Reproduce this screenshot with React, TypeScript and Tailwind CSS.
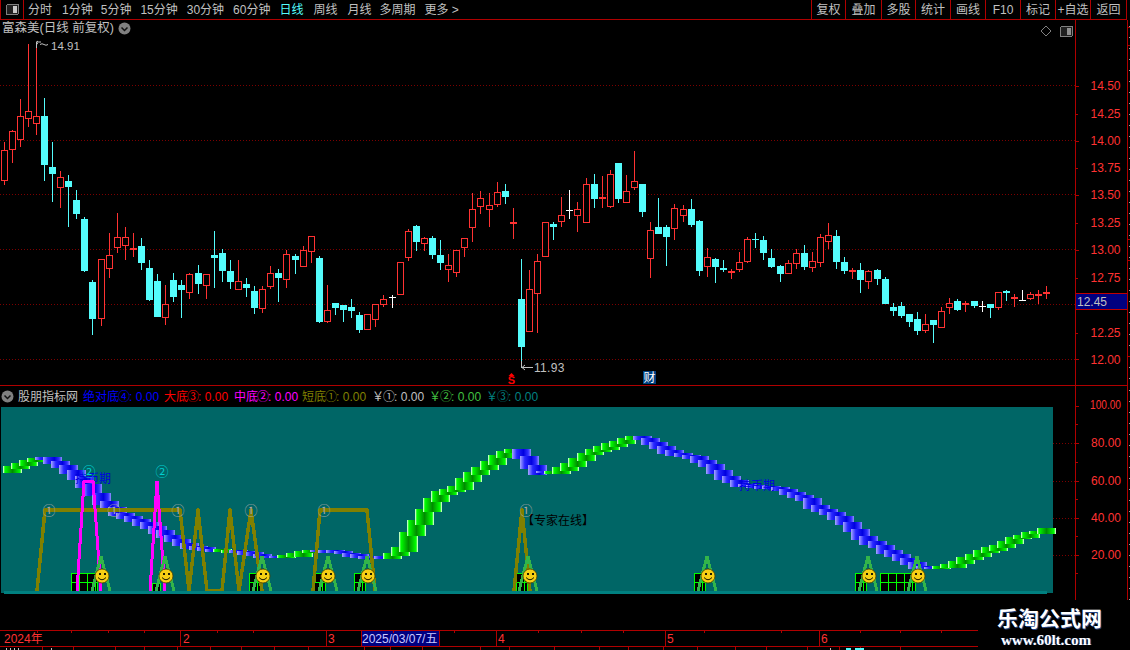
import React from "react";

const RED = "#ff3232";
const CYAN = "#54fcfc";
const LINE = "#b00000";

type C = [string, number, number, number, number];
const g0: C[] = [
  ["r",245,270,360,375],["r",210,213,266,308],["r",117,168,236,260],["r",-48,153,173,200],["r",-54,168,188,224],
  ["c",114,168,315,362],["c",246,321,342,426],["r",333,351,380,444],["c",345,363,381,500],["c",390,420,462,477],
  ["c",471,477,633,636],["c",660,666,777,825],["r",597,597,773,798],["r",519,585,623,654],["r",459,531,560,579],
  ["r",501,531,555,600],["r",519,564,570,591],["c",534,558,609,630],["c",600,624,720,723],["c",642,663,771,771],
  ["r",675,732,771,795],["c",639,660,711,726],["c",660,675,690,774],["r",640,642,696,717],["c",615,639,672,702],
  ["r",642,642,675,717],["c",513,585,594,684],["c",567,579,633,666],["c",600,633,666,687],["r",600,663,687,687],
  ["c",654,672,684,711],["c",678,693,744,762],["r",678,687,744,759],["r",618,639,678,687],["c",627,639,654,726],
];
const g1: C[] = [
  ["r",360,372,447,474],["c",372,378,390,432],["r",348,360,408,408],["r",318,318,363,399],["c",378,384,576,579],
  ["r",465,540,573,579],["c",519,519,534,555],["c",525,525,540,576],["c",507,531,543,564],["c",546,555,600,609],
  ["r",552,552,597,597],["r",522,522,567,591],["r",495,507,522,531],["w",495,501,504,534],["r",396,396,492,492],
  ["r",297,303,381,393],["c",285,288,336,363],["r",321,324,339,363],["c",318,324,375,387],["c",330,375,399,420],
  ["r",372,405,417,456],["r",360,360,426,441],["r",324,324,351,381],["r",189,237,291,336],["r",183,204,228,252],
  ["r",189,225,237,291],["r",156,186,222,231],["c",162,183,201,222],["r",234,276,285,327],["c",387,507,651,714],
  ["r",420,477,603,603],["r",372,393,489,609],["r",276,276,378,378],["c",276,282,291,330],
  ["r",201,255,273,291],["w",180,240,243,267],["r",216,237,255,306],["r",144,162,276,276],["c",132,162,207,234],
  ["r",138,201,210,234],["r",120,132,228,234],["c",99,99,207,219],["r",135,183,216,219],["r",63,153,171,180],
  ["c",162,162,246,261],["r",276,300,384,444],["c",204,291,312,312],["c",285,291,321,408],["r",222,234,294,330],
  ["r",225,237,255,276],["c",207,237,285,291],["c",270,273,423,438],["r",354,381,408,441],["c",384,387,411,459],
  ["c",390,414,420,426],["r",417,423,429,447],["r",366,396,417,426],["r",321,327,393,399],["c",309,327,330,354],
  ["c",318,330,369,390],["c",357,384,411,414],["c",405,408,432,456],["r",390,399,429,432],["r",357,369,399,417],
  ["c",345,369,411,420],["r",366,393,411,426],["r",312,321,396,411],["r",279,315,333,357],["c",300,318,396,417],
];
const g2: C[] = [
  ["c",171,186,213,222],["r",204,210,219,237],["c",189,210,240,279],["r",210,213,243,267],["c",207,210,237,255],
  ["c",231,237,312,312],["c",309,321,333,348],["c",306,318,348,354],["c",342,342,366,381],["c",336,357,393,405],
  ["r",342,372,390,399],["c",360,360,375,429],["r",321,333,381,381],["r",294,309,321,342],["c",297,303,330,333],
  ["r",303,309,318,336],["c",303,303,318,324],["w",303,318,321,336],["c",312,312,324,354],["r",276,276,321,330],
  ["c",270,273,279,303],["r",282,291,300,321],["w",270,300,303,303],["r",276,282,294,300],["r",270,282,288,312],
  ["r",258,276,285,297],
];

const candles = [
  ...g0.map((c) => ({ c, y0: 60 })),
  ...g1.map((c) => ({ c, y0: 130 })),
  ...g2.map((c) => ({ c, y0: 200 })),
];
const cx = (i: number) => 4 + 8 * i + Math.floor(i / 12);

function Candles() {
  return (
    <g shapeRendering="crispEdges">
      {candles.map(({ c, y0 }, i) => {
        const x = cx(i);
        const col = c[0] === "r" ? RED : c[0] === "c" ? CYAN : "#ffffff";
        const Y = (v: number) => Math.round(y0 + v / 3);
        const hi = Y(c[1]), top = Y(c[2]), bot = Y(c[3]), lo = Y(c[4]);
        const thin = bot - top <= 3;
        const outline = c[0] === "r" && !thin;
        return (
          <g key={i}>
            <rect x={x} y={hi} width={1} height={Math.max(lo - hi, 1)} fill={col} />
            {outline ? (
              <rect x={x - 3 + 0.5} y={top + 0.5} width={6} height={bot - top} fill="#000" stroke={col} />
            ) : (
              <rect x={x - 3} y={top} width={7} height={Math.max(c[0] === "r" || c[0] === "w" ? Math.min(bot - top, 2) : bot - top, 1)} fill={col} />
            )}
          </g>
        );
      })}
    </g>
  );
}

const ribbonPts: [number, number][] = [
  [0,472],[12,467],[28,461],[43,458],[60,466],[68,471],[75,476],[85,486],[93,494],[102,503],[115,513],[133,520],[150,527],
  [163,535],[177,542],[190,547],[207,550],[223,551],[240,552],[263,557],[283,557],[293,555],[307,551],[323,551],[340,553],
  [360,557],[378,558],[390,555],[402,547],[408,533],[417,520],[425,508],[433,498],[440,492],[457,487],[463,480],[473,472],
  [482,467],[490,461],[498,455],[507,451],[517,450],[522,459],[530,467],[538,473],[553,472],[562,468],[570,463],[578,458],
  [587,453],[595,450],[603,447],[612,443],[620,441],[630,438],[637,437],[650,443],[658,447],[667,452],[675,454],[690,457],
  [700,461],[708,465],[715,471],[723,477],[732,481],[740,485],[777,489],[788,493],[797,496],[805,499],[812,506],[820,510],
  [828,513],[837,518],[845,524],[852,530],[860,537],[868,542],[877,546],[885,551],[893,555],[902,559],[910,563],[918,567],
  [930,568],[947,566],[955,563],[963,559],[972,556],[980,552],[988,549],[997,546],[1005,542],[1013,538],[1022,536],[1030,533],
  [1038,532],[1047,529],
];
const ribY = (x: number) => {
  for (let k = 1; k < ribbonPts.length; k++) {
    const [a, b] = ribbonPts[k - 1];
    const [c, d] = ribbonPts[k];
    if (x <= c) return b + ((d - b) * (x - a)) / (c - a);
  }
  return 529;
};
const greenRanges = [[0, 40], [215, 232], [283, 316], [384, 520], [546, 640], [936, 1060]];
const isGreen = (x: number) => greenRanges.some(([a, b]) => x >= a && x <= b);

function Ribbon() {
  const blocks = [];
  for (let i = 1; i < 130; i++) {
    const x = cx(i);
    const a = ribY(x - 8), b = ribY(x);
    const d = Math.abs(a - b);
    const top = Math.round(Math.min(a, b)) - 1;
    const h = Math.round(d * 1.1) + (d < 2 ? 2 : 3);
    blocks.push(<rect key={i} x={x - 9} y={top} width={19} height={h} fill={isGreen(x) ? "url(#gr)" : "url(#bl)"} />);
  }
  return <g shapeRendering="crispEdges">{blocks}</g>;
}

function Smile({ x }: { x: number }) {
  const y = 576;
  return (
    <g>
      <circle cx={x} cy={y} r={7} fill="#f6cf14" stroke="#4a3c00" strokeWidth={0.8} />
      <rect x={x - 3} y={y - 3} width={2} height={2} fill="#1a1a00" />
      <rect x={x + 2} y={y - 3} width={2} height={2} fill="#1a1a00" />
      <path d={`M${x - 4} ${y + 1.5}Q${x} ${y + 6} ${x + 4} ${y + 1.5}`} stroke="#1a1a00" strokeWidth={1} fill="none" />
    </g>
  );
}

function GridBox({ x, w, y = 573 }: { x: number; w: number; y?: number }) {
  const v = [];
  for (let a = x; a < x + w; a += 8) v.push(a);
  v.push(x + w);
  const hs = y === 573 ? [573, 582, 591] : [583, 591];
  return (
    <g shapeRendering="crispEdges">
      <rect x={x} y={y} width={w} height={591 - y} fill="#000" />
      {v.map((a) => <rect key={a} x={a} y={y} width={1} height={591 - y} fill="#00ff00" />)}
      {hs.map((b) => <rect key={b} x={x} y={b} width={w + 1} height={1} fill="#00ff00" />)}
    </g>
  );
}

const spikes = [101, 165, 262, 328, 367, 528, 707, 868, 917];
const smiles = [102, 166, 263, 328, 368, 530, 708, 869, 918];

function Indicator() {
  return (
    <svg width={1052} height={186} viewBox="1 407 1052 186" className="block overflow-visible">
      <defs>
        <linearGradient id="gr">
          <stop offset="0" stopColor="#ffffff" />
          <stop offset="0.1" stopColor="#00ff00" />
          <stop offset="0.5" stopColor="#008c00" />
          <stop offset="0.9" stopColor="#00ff00" />
          <stop offset="1" stopColor="#ffffff" />
        </linearGradient>
        <linearGradient id="bl">
          <stop offset="0" stopColor="#a8a8ff" />
          <stop offset="0.25" stopColor="#2828ff" />
          <stop offset="0.6" stopColor="#0000e0" />
          <stop offset="0.85" stopColor="#3030ff" />
          <stop offset="1" stopColor="#9090ff" />
        </linearGradient>
      </defs>
      <Ribbon />
      <text x={75} y={483} fontSize={12} fill="#0000e0">持币期</text>
      <text x={739} y={490} fontSize={12} fill="#0000e0">持币期</text>
      <text x={522} y={525} fontSize={12} fill="#000000">【专家在线】</text>
      <GridBox x={71} w={26} />
      <GridBox x={152} w={8} y={583} />
      <GridBox x={249} w={11} />
      <GridBox x={314} w={11} />
      <GridBox x={354} w={11} />
      <GridBox x={516} w={11} />
      <GridBox x={694} w={11} />
      <GridBox x={855} w={11} />
      <GridBox x={880} w={35} />
      <g fill="none" stroke="#808000" strokeWidth={3.5} shapeRendering="crispEdges" strokeLinejoin="round">
        <polyline points="37,591 45,510 180,510 189,591 198,510 207,591 222,591 230,510 239,591 251,510 262,591" />
        <polyline points="313,591 320,510 367,510 375,591" />
        <polyline points="514,591 522,510 530,591" />
      </g>
      <g fill="none" stroke="#ff00ff" strokeWidth={3} shapeRendering="crispEdges">
        <polyline points="77,591 84,481 93,481 101,591" />
        <polyline points="150,591 157,481 165,591" />
      </g>
      <g fill="none" stroke="#33b54a" strokeWidth={3} shapeRendering="crispEdges" strokeLinejoin="miter">
        {spikes.map((x) => <polyline key={x} points={`${x - 9},591 ${x},556 ${x + 9},591`} />)}
      </g>
      <rect x={4} y={591} width={1043} height={3} fill="#008080" shapeRendering="crispEdges" />
      {[49, 114, 178, 251, 324, 526].map((x) => (
        <text key={x} x={x} y={515} fontSize={13} fill="#a8a8a8" textAnchor="middle">①</text>
      ))}
      {[89, 162].map((x) => (
        <text key={x} x={x} y={476} fontSize={13} fill="#00d0d0" textAnchor="middle">②</text>
      ))}
      {smiles.map((x) => <Smile key={x} x={x} />)}
    </svg>
  );
}

function SideTicks({ h, y0, red }: { h: number; y0: number; red: number[] }) {
  const ys = [];
  for (let y = y0; y < h; y += 11) ys.push(y);
  return (
    <svg width={3} height={h} className="block shrink-0" shapeRendering="crispEdges">
      {ys.map((y) => <rect key={y} x={1} y={y} width={2} height={1} fill="#a0a0a0" />)}
      {red.map((y) => <rect key={y} x={0} y={y} width={3} height={1} fill={LINE} />)}
    </svg>
  );
}

const mainAxis: [string, number][] = [["14.50", 86], ["14.25", 114], ["14.00", 141], ["13.75", 168], ["13.50", 195], ["13.25", 223], ["13.00", 250], ["12.75", 278], ["12.25", 333], ["12.00", 360]];
const subAxis: [string, number][] = [["100.00", 405], ["80.00", 443], ["60.00", 481], ["40.00", 518], ["20.00", 555]];

function PriceAxis() {
  return (
    <svg width={51} height={365} viewBox="1076 20 51 365" className="block">
      <g shapeRendering="crispEdges">
        {[86, 141, 195, 250, 304, 359].map((y) => <rect key={y} x={1076} y={y} width={3} height={1} fill={LINE} />)}
        {[114, 168, 223, 278, 333].map((y) => <rect key={y} x={1076} y={y} width={2} height={1} fill={LINE} />)}
      </g>
      {mainAxis.map(([t, y]) => (
        <text key={t} x={1120.5} y={y + 4} fontSize={12} fill={RED} textAnchor="end">{t}</text>
      ))}
    </svg>
  );
}

function SubAxis() {
  return (
    <svg width={51} height={214} viewBox="1076 386 51 214" className="block">
      <g shapeRendering="crispEdges">
        {[406, 443, 481, 518, 555].map((y) => <rect key={y} x={1076} y={y} width={3} height={1} fill={LINE} />)}
        {[424, 462, 499, 536, 573].map((y) => <rect key={y} x={1076} y={y} width={2} height={1} fill={LINE} />)}
      </g>
      {subAxis.map(([t, y]) =>
        t === "100.00" ? (
          <text key={t} x={1090} y={y + 4} fontSize={12} fill={RED} textLength={31} lengthAdjust="spacingAndGlyphs">{t}</text>
        ) : (
          <text key={t} x={1121} y={y + 4} fontSize={12} fill={RED} textAnchor="end">{t}</text>
        )
      )}
    </svg>
  );
}

function Chevron() {
  return (
    <svg width={13} height={13} viewBox="0 0 13 13" className="block shrink-0">
      <circle cx={6.5} cy={6.5} r={6} fill="#808080" />
      <path d="M3.5 5.5L6.5 8.5L9.5 5.5" stroke="#111" strokeWidth={1.5} fill="none" />
    </svg>
  );
}

function PanelIcon({ light = false }: { light?: boolean }) {
  return (
    <svg width={13} height={11} viewBox="0 0 13 11" className="block shrink-0" shapeRendering="crispEdges">
      <rect x={0.5} y={0.5} width={12} height={10} rx={1.5} fill="#202020" stroke="#808080" />
      <rect x={7} y={2} width={4} height={7} fill={light ? "#c8c8c8" : "#909090"} />
    </svg>
  );
}

const navItems = [
  { t: "分时", c: "ml-[4px]" },
  { t: "1分钟", c: "ml-[10px]" },
  { t: "5分钟", c: "ml-[8px]" },
  { t: "15分钟", c: "ml-[9px]" },
  { t: "30分钟", c: "ml-[9px]" },
  { t: "60分钟", c: "ml-[9px]" },
  { t: "日线", c: "ml-[9px] text-[#54fcfc]" },
  { t: "周线", c: "ml-[10px]" },
  { t: "月线", c: "ml-[10px]" },
  { t: "多周期", c: "ml-[8px]" },
  { t: "更多 >", c: "ml-[9px]" },
];
const rightBtns = [
  { t: "复权", c: "w-[34px]" },
  { t: "叠加", c: "w-[36px]" },
  { t: "多股", c: "w-[34px]" },
  { t: "统计", c: "w-[35px]" },
  { t: "画线", c: "w-[35px]" },
  { t: "F10", c: "w-[35px]" },
  { t: "标记", c: "w-[35px]" },
  { t: "+自选", c: "w-[35px]" },
  { t: "返回", c: "w-[37px]" },
];
const legend = [
  { a: "绝对底", d: "④", c: "text-[#0000ff]", w: "w-[81px]" },
  { a: "大底", d: "③", c: "text-[#ff0000]", w: "w-[70px]" },
  { a: "中底", d: "②", c: "text-[#ff00ff]", w: "w-[68px]" },
  { a: "短底", d: "①", c: "text-[#808000]", w: "w-[70px]" },
  { a: "￥", d: "①", c: "text-[#c0c0c0]", w: "w-[57px]" },
  { a: "￥", d: "②", c: "text-[#40c040]", w: "w-[57px]" },
  { a: "￥", d: "③", c: "text-[#008080]", w: "w-[57px]" },
];

const topTicks = [37, 71, 108, 144, 217, 253, 393, 454, 538, 581, 623, 704, 781, 860, 900, 941];
const bottomTicks = [42, 73, 115, 144, 177, 210, 241, 274, 308, 364, 390, 422, 480, 509, 554, 599, 628, 663, 697, 735, 766, 807, 839, 860, 900];

function DateBar() {
  return (
    <svg width={978} height={20} viewBox="0 630 978 20" className="block">
      <g shapeRendering="crispEdges">
        <rect x={361} y={631} width={79} height={15} fill="#000080" />
        <rect x={0} y={630} width={978} height={1} fill={LINE} />
        <rect x={0} y={646} width={978} height={1} fill={LINE} />
        {[180, 326, 361, 439, 496, 665, 819].map((x) => <rect key={x} x={x} y={631} width={1} height={15} fill={LINE} />)}
        {topTicks.map((x) => <rect key={x} x={x} y={631} width={1} height={2} fill={LINE} />)}
        {bottomTicks.map((x) => <rect key={x} x={x} y={647} width={1} height={3} fill={LINE} />)}
        <rect x={6} y={648} width={1} height={2} fill="#c0c0c0" />
        <rect x={10} y={648} width={1} height={2} fill="#c0c0c0" />
        <rect x={14} y={648} width={1} height={2} fill="#c0c0c0" />
        <rect x={18} y={648} width={1} height={2} fill="#c0c0c0" />
        <rect x={51} y={648} width={1} height={2} fill="#c0c0c0" />
        <rect x={830} y={648} width={1} height={2} fill="#c0c0c0" />
        <rect x={846} y={648} width={5} height={2} fill="#54fcfc" />
        <rect x={855} y={648} width={9} height={2} fill="#54fcfc" />
      </g>
      <text x={4} y={643} fontSize={12} fill={RED}>2024年</text>
      <text x={183} y={643} fontSize={12} fill={RED}>2</text>
      <text x={328} y={643} fontSize={12} fill={RED}>3</text>
      <text x={362} y={643} fontSize={12} fill="#c8c8ff">2025/03/07/五</text>
      <text x={498} y={643} fontSize={12} fill={RED}>4</text>
      <text x={667} y={643} fontSize={12} fill={RED}>5</text>
      <text x={821} y={643} fontSize={12} fill={RED}>6</text>
    </svg>
  );
}

export default function App() {
  return (
    <div className="relative w-[1130px] h-[650px] overflow-hidden bg-black text-[12px] leading-none text-[#c0c0c0] font-['Liberation_Sans','Noto_Sans_CJK_SC',sans-serif]">
      <header className="flex h-[20px] w-[1127px] border-b border-[#b00000]">
        <div className="flex w-[24px] items-center justify-center border-x border-[#b00000]">
          <PanelIcon light />
        </div>
        <nav className="flex flex-1 items-center whitespace-nowrap">
          {navItems.map((n) => (
            <span key={n.t} className={n.c}>{n.t}</span>
          ))}
        </nav>
        {rightBtns.map((b, i) => (
          <div
            key={b.t}
            className={`flex items-center justify-center whitespace-nowrap border-l border-[#b00000] ${b.c} ${i === rightBtns.length - 1 ? "border-r" : ""}`}
          >
            {b.t}
          </div>
        ))}
      </header>

      <section className="flex h-[366px]">
        <div className="relative w-[1075px] border-b border-[#b00000]">
          <svg width={1075} height={365} viewBox="0 20 1075 365" className="block">
            <g stroke="#7c0000" strokeDasharray="1 2" shapeRendering="crispEdges">
              {[85, 140, 194, 249, 304, 359].map((y) => <line key={y} x1={0} x2={1075} y1={y + 0.5} y2={y + 0.5} />)}
            </g>
            <Candles />
            <path d="M36.5 48V42H41M38 41l-2 1.5 2 1.5M40 44.5q2-1.5 4 0t4 0" stroke="#c0c0c0" fill="none" />
            <text x={51} y={50} fontSize={11.5} fill="#c0c0c0">14.91</text>
            <path d="M521.5 361V367.5H533M525 365l-3 2.5 3 2.5" stroke="#c0c0c0" fill="none" />
            <text x={534} y={372} fontSize={12} fill="#c0c0c0" letterSpacing={0.3}>11.93</text>
            <path d="M511.5 373l3 3h-6z" fill="#ff0000" />
            <text x={511.5} y={384} fontSize={11} fontWeight={700} fill="#ff0000" textAnchor="middle">S</text>
            <rect x={643} y={371} width={13} height={13} fill="#004080" />
            <text x={643.5} y={382} fontSize={12} fill="#ffffff">财</text>
          </svg>
          <div className="absolute left-[2px] top-[2px] flex items-center gap-[4px] whitespace-nowrap text-[12.5px]">
            <span>富森美(日线 前复权)</span>
            <Chevron />
          </div>
          <div className="absolute right-[2px] top-[5px] flex items-center gap-[8px]">
            <svg width={12} height={12} viewBox="0 0 12 12" className="block">
              <path d="M6 1L11 6L6 11L1 6Z" stroke="#808080" fill="none" />
            </svg>
            <PanelIcon />
          </div>
        </div>
        <div className="relative box-content w-[51px] border-x border-b border-[#b00000]">
          <PriceAxis />
          <div className="absolute left-0 top-[273px] flex h-[17px] w-[51px] items-center border-y border-[#c00000] bg-[#000080] pl-[1px] text-[12px] text-[#c0c0c0]">
            12.45
          </div>
        </div>
        <SideTicks h={366} y0={6} red={[7, 25, 219, 240, 336]} />
      </section>

      <section className="flex h-[214px]">
        <div className="w-[1075px]">
          <div className="flex h-[21px] items-center whitespace-nowrap">
            <span className="ml-[1px]"><Chevron /></span>
            <span className="ml-[4px] mr-[5px] text-[#c0c0c0]">股朋指标网</span>
            {legend.map((l, i) => (
              <span key={i} className={`${l.w} ${l.c}`}>
                {l.a}<span className="mx-[-1px]">{l.d}</span>: 0.00
              </span>
            ))}
          </div>
          <div className="flex">
            <div className="ml-[1px] h-[186px] w-[1052px] bg-[#006666]">
              <Indicator />
            </div>
            <svg width={22} height={186} viewBox="1053 407 22 186" className="block">
              <g stroke="#7c0000" strokeDasharray="1 2" shapeRendering="crispEdges">
                {[443, 481, 518, 555].map((y) => <line key={y} x1={1053} x2={1075} y1={y + 0.5} y2={y + 0.5} />)}
              </g>
            </svg>
          </div>
        </div>
        <div className="box-content w-[51px] border-x border-[#b00000]">
          <SubAxis />
        </div>
        <SideTicks h={214} y0={4} red={[]} />
      </section>

      <div className="h-[30px]" />
      <DateBar />

      <div className="absolute left-[997px] top-[607px] flex flex-col items-start text-white">
        <span className="text-[21px] font-bold leading-[23px] whitespace-nowrap [text-shadow:1px_1px_0_#204080]">乐淘公式网</span>
        <span className="ml-[4px] mt-[2px] whitespace-nowrap font-['Liberation_Serif',serif] text-[15px] font-bold leading-[16px] [text-shadow:1px_0_0_#204080]">www.60lt.com</span>
      </div>
    </div>
  );
}
